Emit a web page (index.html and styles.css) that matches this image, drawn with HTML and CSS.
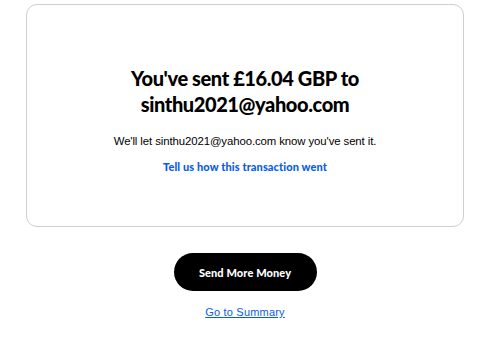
FILE: index.html
```html
<!DOCTYPE html>
<html>
<head>
<meta charset="utf-8">
<link rel="stylesheet" href="styles.css">
</head>
<body>
<main class="page">
  <section class="card">
    <h1 class="title">You've sent £16.04 GBP to<br>sinthu2021@yahoo.com</h1>
    <p class="note">We'll let sinthu2021@yahoo.com know you've sent it.</p>
    <a class="feedback" href="#">Tell us how this transaction went</a>
  </section>
  <div class="actions">
    <a class="btn" href="#">Send More Money</a>
    <a class="summary" href="#">Go to Summary</a>
  </div>
</main>
</body>
</html>
```

FILE: styles.css
```css
html, body {
  margin: 0;
  padding: 0;
  background: #fff;
}
body {
  font-family: "Liberation Sans", Arial, sans-serif;
  color: #000;
}
.page {
  width: 438px;
  margin-left: 26px;
  padding-top: 4px;
}
.card {
  box-sizing: border-box;
  height: 223px;
  border: 1px solid #cfcfcf;
  border-radius: 11px;
  display: flex;
  flex-direction: column;
  align-items: center;
  padding-top: 60px;
}
.title {
  margin: 0;
  font-family: "Lato", sans-serif;
  font-weight: 900;
  font-size: 20px;
  line-height: 26px;
  text-align: center;
  letter-spacing: -0.4px;
}
.note {
  margin: 17px 0 0;
  font-size: 11.4px;
  line-height: 14px;
  letter-spacing: -0.1px;
}
.feedback {
  margin-top: 12px;
  font-family: "Lato", sans-serif;
  font-weight: 900;
  font-size: 11px;
  line-height: 14px;
  color: #0a5ce8;
  text-decoration: none;
  letter-spacing: 0.1px;
}
.actions {
  display: flex;
  flex-direction: column;
  align-items: center;
  padding-top: 26px;
}
.btn {
  display: flex;
  align-items: center;
  justify-content: center;
  width: 143px;
  height: 38px;
  border-radius: 19px;
  background: #000;
  color: #fff;
  font-family: "Lato", sans-serif;
  font-weight: 900;
  font-size: 11px;
  text-decoration: none;
  letter-spacing: 0.1px;
}
.summary {
  margin-top: 14px;
  font-size: 11px;
  line-height: 14px;
  color: #0a5ce8;
  text-decoration: underline;
  letter-spacing: 0.2px;
}
```
